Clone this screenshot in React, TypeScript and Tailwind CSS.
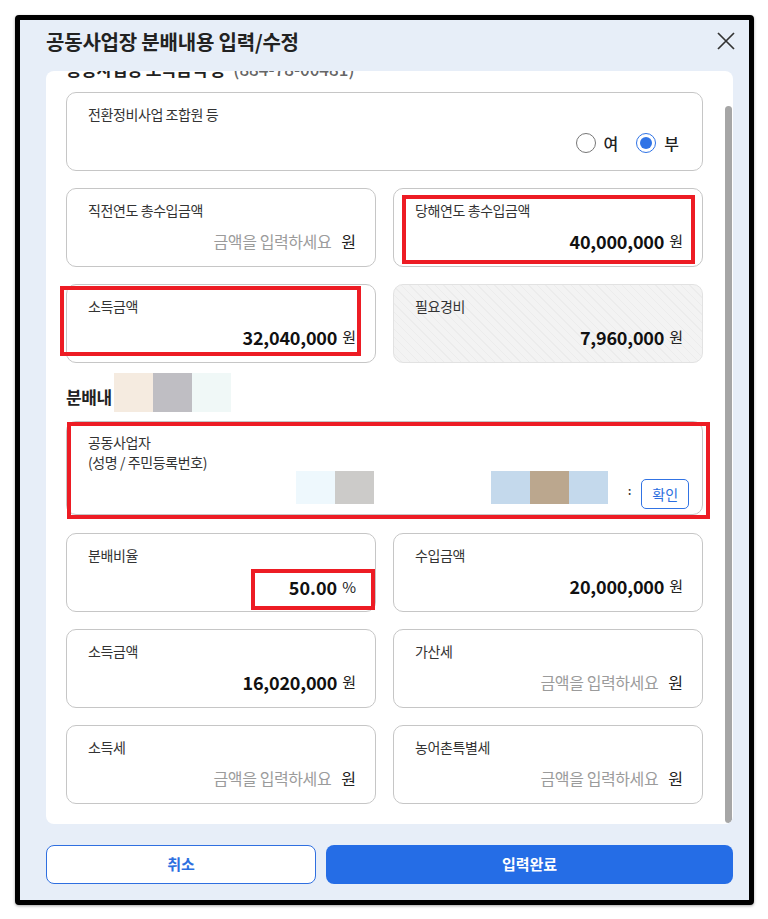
import React from "react";

const sans = "font-['Noto_Sans_CJK_KR','Noto_Sans',sans-serif]";

function Won({ value }: { value?: string }) {
  return (
    <div className="mt-[9px] flex h-[24px] items-center justify-end gap-[5px]">
      {value ? (
        <span className="text-[18px] font-semibold tracking-[-0.2px] text-[#111]">{value}</span>
      ) : (
        <span className="mr-[5px] text-[16px] tracking-[-0.4px] text-[#9b9b9b]">금액을 입력하세요</span>
      )}
      <span className={`${value ? "text-[15px]" : "text-[16px]"} text-[#222]`}>원</span>
    </div>
  );
}

function Field({
  label,
  value,
  unit,
  readOnly,
}: {
  label: string;
  value?: string;
  unit?: string;
  readOnly?: boolean;
}) {
  return (
    <div
      className={`flex h-[79px] flex-col rounded-[10px] border pl-[21px] pr-[19px] pt-[11px] ${
        readOnly
          ? "border-[#e2e2e2] bg-[repeating-linear-gradient(45deg,#f3f3f3_0px,#f3f3f3_5px,#ececec_5px,#ececec_6px)]"
          : "border-[#c6c6c6] bg-white"
      }`}
    >
      <span className="text-[14px] leading-[20px] tracking-[-0.4px] text-[#333]">{label}</span>
      {unit ? (
        <div className="mt-[10px] flex h-[24px] items-center justify-end gap-[5px]">
          <span className="text-[18px] font-semibold text-[#111]">{value}</span>
          <span className="text-[15px] text-[#222]">{unit}</span>
        </div>
      ) : (
        <Won value={value} />
      )}
    </div>
  );
}

function Radio({ label, checked }: { label: string; checked?: boolean }) {
  return (
    <label className="flex items-center gap-[8px]">
      <span
        className={`flex h-[20px] w-[20px] items-center justify-center rounded-full border bg-white ${
          checked ? "border-[#2f73e6]" : "border-[#777]"
        }`}
      >
        {checked && <span className="h-[12px] w-[12px] rounded-full bg-[#2f73e6]" />}
      </span>
      <span className="text-[16px] font-medium text-[#222]">{label}</span>
    </label>
  );
}

function Tile({ color, h = "h-[33px]" }: { color: string; h?: string }) {
  return <div className={`w-[39px] ${h} ${color}`} />;
}

function Mark({ className }: { className: string }) {
  return <div className={`absolute border-[4px] border-[#ed1c24] ${className}`} />;
}

export default function App() {
  return (
    <div className={`relative min-h-[919px] bg-white pl-[15px] pt-[15px] ${sans}`}>
      <div className="flex h-[890px] w-[739px] flex-col rounded-[4px] border-[5px] border-black bg-[#e7eef8] pl-[26px] pr-[16px] shadow-[0_1px_3px_rgba(0,0,0,0.35)]">
        {/* header */}
        <div className="flex h-[51px] shrink-0 items-start justify-between pt-[9px]">
          <h1 className="text-[20px] font-bold leading-[26px] tracking-[-0.2px] text-[#222]">
            공동사업장 분배내용 입력/수정
          </h1>
          <button className="-mr-[3px] mt-[2px] text-[#333]">
            <svg width="20" height="20" viewBox="0 0 20 20" fill="none" stroke="currentColor" strokeWidth="1.7">
              <path d="M2 2 L18 18 M18 2 L2 18" />
            </svg>
          </button>
        </div>

        {/* scroll body */}
        <div className="flex h-[753px] shrink-0 overflow-hidden rounded-[8px] bg-white">
          <div className="flex w-[657px] flex-col overflow-hidden pl-[20px]">
            <div className="-mt-[14px] flex h-[24px] shrink-0 items-center gap-[8px] text-[17px] leading-[24px]">
              <span className="font-bold tracking-[-0.4px] text-[#222]">공동사업장 소득금액 등</span>
              <span className="font-medium text-[#666]">(884-78-00481)</span>
            </div>

            <div className="mt-[11px] flex h-[79px] shrink-0 flex-col rounded-[10px] border border-[#c6c6c6] pl-[21px] pr-[23px] pt-[11px]">
              <span className="text-[14px] leading-[20px] tracking-[-0.4px] text-[#333]">전환정비사업 조합원 등</span>
              <div className="mt-[9px] flex h-[20px] items-center justify-end gap-[18px]">
                <Radio label="여" />
                <Radio label="부" checked />
              </div>
            </div>

            <div className="mt-[17px] grid shrink-0 grid-cols-2 gap-[17px]">
              <Field label="직전연도 총수입금액" />
              <Field label="당해연도 총수입금액" value="40,000,000" />
              <Field label="소득금액" value="32,040,000" />
              <Field label="필요경비" value="7,960,000" readOnly />
            </div>

            <div className="mt-[22px] flex h-[24px] shrink-0 items-start">
              <span className="text-[17px] font-bold leading-[24px] tracking-[-0.4px] text-[#222]">분배내</span>
              <div className="-mt-[12px] ml-[2px] flex">
                <Tile color="bg-[#f5ebe0]" h="h-[39px]" />
                <Tile color="bg-[#bfbec3]" h="h-[39px]" />
                <Tile color="bg-[#f0f8f7]" h="h-[39px]" />
              </div>
            </div>

            <div className="mt-[12px] flex h-[94px] shrink-0 flex-col rounded-[10px] border border-[#c6c6c6] pl-[21px] pt-[10px]">
              <span className="text-[14px] leading-[20px] tracking-[-0.4px] text-[#333]">공동사업자</span>
              <span className="text-[14px] leading-[20px] tracking-[-0.4px] text-[#333]">(성명 / 주민등록번호)</span>
              <div className="-mt-[1px] flex items-start">
                <div className="ml-[208px] flex">
                  <Tile color="bg-[#eef8fd]" />
                  <Tile color="bg-[#cccbc9]" />
                </div>
                <div className="ml-[117px] flex">
                  <Tile color="bg-[#c4d9ec]" />
                  <Tile color="bg-[#bba78e]" />
                  <Tile color="bg-[#c4d9ec]" />
                </div>
                <span className="ml-[20px] mt-[14px] text-[10px] font-bold leading-[12px] text-[#333]">:</span>
                <button className="ml-[10px] mt-[8px] flex h-[30px] w-[48px] items-center justify-center rounded-[5px] border border-[#3173e4] text-[14px] text-[#2a6de0]">
                  확인
                </button>
              </div>
            </div>

            <div className="mt-[18px] grid shrink-0 grid-cols-2 gap-[17px]">
              <Field label="분배비율" value="50.00" unit="%" />
              <Field label="수입금액" value="20,000,000" />
              <Field label="소득금액" value="16,020,000" />
              <Field label="가산세" />
              <Field label="소득세" />
              <Field label="농어촌특별세" />
            </div>
          </div>

          {/* scrollbar */}
          <div className="ml-[22px] flex w-[7px] flex-col pb-[1px] pt-[35px]">
            <div className="flex-1 rounded-full bg-[#a6a6a6]" />
          </div>
        </div>

        {/* footer */}
        <div className="mt-[21px] flex h-[39px] shrink-0 gap-[10px]">
          <button className="w-[270px] rounded-[8px] border border-[#2f6fe0] bg-white text-[15px] font-bold text-[#2c6fe0]">
            취소
          </button>
          <button className="flex-1 rounded-[8px] bg-[#256de6] text-[15px] font-bold text-white">입력완료</button>
        </div>
      </div>

      <Mark className="left-[402px] top-[195px] h-[69px] w-[293px]" />
      <Mark className="left-[60px] top-[286px] h-[70px] w-[301px]" />
      <Mark className="left-[67px] top-[422px] h-[97px] w-[643px]" />
      <Mark className="left-[251px] top-[569px] h-[41px] w-[124px]" />
    </div>
  );
}
